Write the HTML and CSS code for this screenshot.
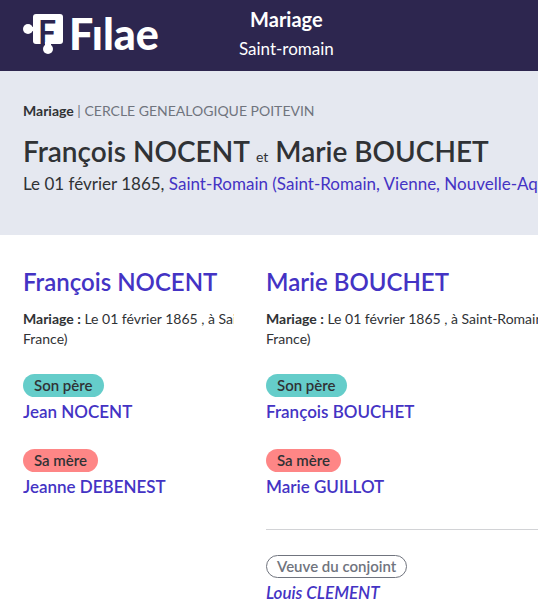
FILE: index.html
```html
<!DOCTYPE html>
<html lang="fr">
<head>
<meta charset="utf-8">
<meta name="viewport" content="width=device-width, initial-scale=1">
<title>Mariage Saint-romain</title>
<link rel="stylesheet" href="styles.css">
</head>
<body>
<header class="topbar">
  <a class="logo" href="#" aria-label="Filae">
    <svg class="logo-mark" viewBox="0 0 42 42" width="42" height="42" aria-hidden="true">
      <circle cx="5" cy="16" r="5"/>
      <rect x="7" y="14" width="6" height="4"/>
      <rect x="10" y="1" width="30" height="30" rx="3"/>
      <text class="mark-letter" x="15" y="31">F</text>
      <rect x="22" y="29" width="6" height="6"/>
      <circle cx="25" cy="36" r="5"/>
    </svg>
    <span class="wordmark">Fılae</span>
  </a>
  <div class="topbar-title">
    <strong>Mariage</strong>
    <span>Saint-romain</span>
  </div>
</header>
<section class="summary">
  <p class="source"><strong>Mariage</strong> | CERCLE GENEALOGIQUE POITEVIN</p>
  <h1>François NOCENT <small>et</small> Marie BOUCHET</h1>
  <p class="event">Le 01 février 1865, <a href="#">Saint-Romain (Saint-Romain, Vienne, Nouvelle-Aquitaine, France)</a></p>
</section>
<main class="people">
  <article class="person">
    <h2><a href="#">François NOCENT</a></h2>
    <p class="fact"><strong>Mariage :</strong> Le 01 février 1865 , à Saint-Romain (Saint-Romain, Vienne, Nouvelle-Aquitaine,<br>France)</p>
    <div class="relation"><span class="tag father">Son père</span><a href="#">Jean NOCENT</a></div>
    <div class="relation"><span class="tag mother">Sa mère</span><a href="#">Jeanne DEBENEST</a></div>
  </article>
  <article class="person">
    <h2><a href="#">Marie BOUCHET</a></h2>
    <p class="fact"><strong>Mariage :</strong> Le 01 février 1865 , à Saint-Romain (Saint-Romain, Vienne, Nouvelle-Aquitaine,<br>France)</p>
    <div class="relation"><span class="tag father">Son père</span><a href="#">François BOUCHET</a></div>
    <div class="relation"><span class="tag mother">Sa mère</span><a href="#">Marie GUILLOT</a></div>
    <hr>
    <div class="relation"><span class="tag spouse">Veuve du conjoint</span><a class="former" href="#">Louis CLEMENT</a></div>
  </article>
</main>
</body>
</html>
```

FILE: styles.css
```css
* { box-sizing: border-box; }
body {
  margin: 0;
  font-family: Lato, "Liberation Sans", sans-serif;
  color: #303235;
  background: #fff;
  overflow-x: hidden;
}
h1, h2, p { margin: 0; }
a { color: #4433c4; text-decoration: none; }
strong { font-weight: 700; }

.topbar {
  display: flex;
  align-items: center;
  gap: 80px;
  padding: 4px 23px 7px;
  background: #2d264f;
  color: #fff;
}
.logo {
  display: flex;
  align-items: center;
  gap: 4px;
  color: #fff;
}
.logo-mark { fill: #fff; }
.mark-letter { fill: #2d264f; font-size: 32px; font-weight: 700; }
.wordmark { font-size: 43px; line-height: 48px; font-weight: 900; }
.topbar-title {
  display: flex;
  flex-direction: column;
  align-items: center;
  font-size: 17px;
  line-height: 30px;
}
.topbar-title strong { font-size: 20px; line-height: 30px; }

.summary {
  padding: 29px 23px 40px;
  background: #e5e8f0;
  white-space: nowrap;
  overflow: hidden;
}
.source { font-size: 14px; line-height: 21px; color: #70747e; }
.source strong { color: #303235; }
h1 { margin-top: 14px; font-size: 28px; line-height: 32px; font-weight: 600; }
h1 small { font-size: 14px; font-weight: 400; }
.event { font-size: 17px; line-height: 22px; }

.people {
  display: grid;
  grid-template-columns: minmax(0, 211fr) minmax(0, 272fr);
  gap: 32px;
  padding: 30px 0 10px 23px;
}
.person { overflow: hidden; }
h2 { font-size: 24px; line-height: 34px; font-weight: 600; }
.fact { margin: 10px 0 25px; font-size: 14px; line-height: 20px; white-space: nowrap; }
.relation {
  display: flex;
  flex-direction: column;
  align-items: flex-start;
  gap: 1px;
  margin-bottom: 24px;
  font-size: 17px;
  line-height: 27px;
  font-weight: 600;
}
.relation:last-child { margin-bottom: 0; }
.tag {
  padding: 0 11px;
  border-radius: 12px;
  font-size: 15px;
  line-height: 23px;
}
.father { background: #65cdca; }
.mother { background: #fe8686; }
.spouse {
  padding: 0 10px;
  border: 1px solid #70747e;
  line-height: 21px;
  color: #70747e;
}
.former { font-style: italic; }
hr { margin: 29px 0 25px; border: 0; border-top: 1px solid #d2d3d6; }
```
